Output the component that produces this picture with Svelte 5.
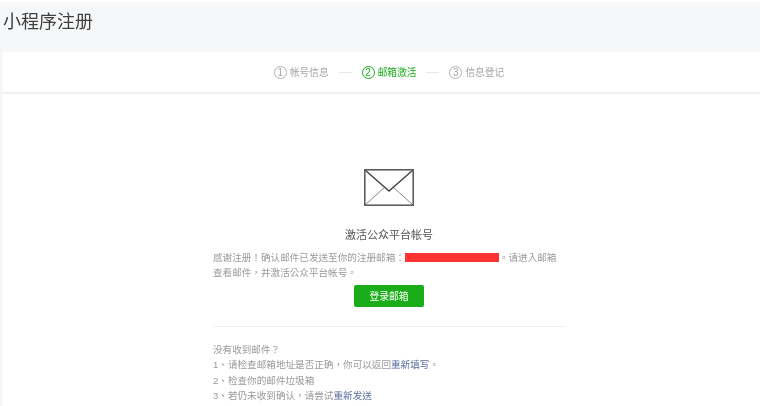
<script>
	const steps = [
		{ num: 1, text: '帐号信息' },
		{ num: 2, text: '邮箱激活', current: true },
		{ num: 3, text: '信息登记' },
	];
</script>

<div class="page">
	<header class="top">
		<h1>小程序注册</h1>
	</header>

	<main class="card">
		<nav class="steps">
			{#each steps as step, i}
				{#if i > 0}
					<span class="dash"></span>
				{/if}
				<div class="step" class:current={step.current}>
					<span class="num">{step.num}</span>
					<span>{step.text}</span>
				</div>
			{/each}
		</nav>

		<section class="body">
			<svg class="envelope" width="50" height="37" viewBox="0 0 50 37" fill="none">
				<path d="M1 36 L21 18 M49 36 L29 18" stroke="#888" stroke-width="1" />
				<path d="M1 1 L25 22 L49 1" stroke="#444" stroke-width="1.4" />
				<rect x="0.8" y="0.8" width="48.4" height="35.4" stroke="#555" stroke-width="1.5" />
			</svg>
			<h2>激活公众平台帐号</h2>
			<p class="intro">感谢注册！确认邮件已发送至你的注册邮箱：<span class="redact"></span>。请进入邮箱<br />查看邮件，并激活公众平台帐号。</p>
			<button class="login">登录邮箱</button>
			<hr />
			<div class="help">
				<p>没有收到邮件？</p>
				<p>1、请检查邮箱地址是否正确，你可以返回<a href="#a">重新填写</a>。</p>
				<p>2、检查你的邮件垃圾箱</p>
				<p>3、若仍未收到确认，请尝试<a href="#a">重新发送</a></p>
			</div>
		</section>
	</main>
</div>

<style>
	:global(body) {
		background: #fff;
	}
	.page {
		width: 760px;
		height: 406px;
		overflow: hidden;
		padding-top: 2px;
		box-sizing: border-box;
		background: #f6f7f9;
		font-family: "Liberation Sans", "Noto Sans CJK SC", sans-serif;
		box-shadow: inset 0 2px 0 #fff;
		filter: blur(0.3px);
	}
	.top {
		height: 50px;
		padding-left: 3px;
	}
	h1 {
		margin: 0;
		padding-top: 9px;
		font-size: 18px;
		line-height: 22px;
		font-weight: 400;
		color: #404040;
	}
	.card {
		margin-left: 3px;
		height: 354px;
		background: #fff;
	}
	.steps {
		height: 40px;
		border-bottom: 2px solid #f1f1f1;
		display: flex;
		align-items: center;
		justify-content: center;
		padding-left: 15px;
		font-size: 9.7px;
		color: #a3a3a3;
	}
	.step {
		display: flex;
		align-items: center;
		gap: 3px;
	}
	.num {
		width: 11px;
		height: 11px;
		border: 1px solid #b0b0b0;
		border-radius: 50%;
		display: flex;
		align-items: center;
		justify-content: center;
		font-size: 10px;
	}
	.current {
		color: #1aad19;
	}
	.current .num {
		border-color: #1aad19;
	}
	.dash {
		width: 13px;
		height: 1px;
		margin: 0 10px;
		background: #e8e8e8;
	}
	.body {
		width: 352px;
		margin-left: 210px;
		padding-top: 75px;
		display: flex;
		flex-direction: column;
		align-items: center;
		color: #999;
		font-size: 9.6px;
		font-family: "Liberation Sans", "Noto Sans CJK TC", sans-serif;
	}
	.envelope {
		display: block;
	}
	h2 {
		margin: 21px 0 0;
		font-size: 11px;
		line-height: 16px;
		font-weight: 400;
		color: #555;
		font-family: "Liberation Sans", "Noto Sans CJK SC", sans-serif;
	}
	.intro {
		width: 100%;
		margin: 7px 0 0;
		line-height: 15px;
		white-space: nowrap;
	}
	.redact {
		display: inline-block;
		width: 94px;
		height: 9px;
		background: #ff3333;
		vertical-align: -1px;
	}
	.login {
		width: 70px;
		height: 22px;
		margin-top: 5px;
		padding: 0;
		border: 0;
		border-radius: 2px;
		background: #1aad19;
		color: #fff;
		font: inherit;
		font-size: 9.8px;
	}
	hr {
		width: 100%;
		height: 1px;
		margin: 19px 0 0;
		border: 0;
		background: #f0f0f0;
	}
	.help {
		width: 100%;
		margin-top: 15px;
		line-height: 15.4px;
	}
	.help p {
		margin: 0;
	}
	.help a {
		color: #5a6e9c;
		text-decoration: none;
	}
</style>
